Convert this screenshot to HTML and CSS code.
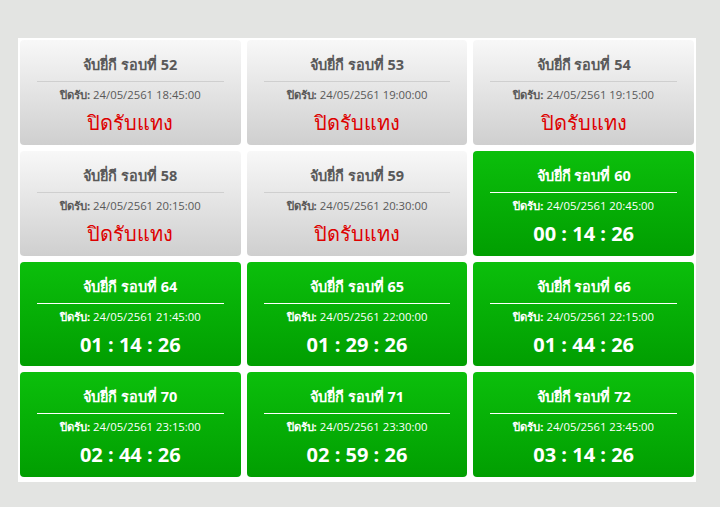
FILE: index.html
```html
<!DOCTYPE html>
<html lang="th">
<head>
<meta charset="utf-8">
<link rel="stylesheet" href="styles.css">
</head>
<body>
<div class="board">
  <div class="card closed"><div class="title">จับยี่กี รอบที่ 52</div><div class="rule"></div><div class="close-at"><b>ปิดรับ:</b> 24/05/2561 18:45:00</div><div class="status">ปิดรับแทง</div></div>
  <div class="card closed"><div class="title">จับยี่กี รอบที่ 53</div><div class="rule"></div><div class="close-at"><b>ปิดรับ:</b> 24/05/2561 19:00:00</div><div class="status">ปิดรับแทง</div></div>
  <div class="card closed"><div class="title">จับยี่กี รอบที่ 54</div><div class="rule"></div><div class="close-at"><b>ปิดรับ:</b> 24/05/2561 19:15:00</div><div class="status">ปิดรับแทง</div></div>
  <div class="card closed"><div class="title">จับยี่กี รอบที่ 58</div><div class="rule"></div><div class="close-at"><b>ปิดรับ:</b> 24/05/2561 20:15:00</div><div class="status">ปิดรับแทง</div></div>
  <div class="card closed"><div class="title">จับยี่กี รอบที่ 59</div><div class="rule"></div><div class="close-at"><b>ปิดรับ:</b> 24/05/2561 20:30:00</div><div class="status">ปิดรับแทง</div></div>
  <div class="card open"><div class="title">จับยี่กี รอบที่ 60</div><div class="rule"></div><div class="close-at"><b>ปิดรับ:</b> 24/05/2561 20:45:00</div><div class="timer">00 : 14 : 26</div></div>
  <div class="card open"><div class="title">จับยี่กี รอบที่ 64</div><div class="rule"></div><div class="close-at"><b>ปิดรับ:</b> 24/05/2561 21:45:00</div><div class="timer">01 : 14 : 26</div></div>
  <div class="card open"><div class="title">จับยี่กี รอบที่ 65</div><div class="rule"></div><div class="close-at"><b>ปิดรับ:</b> 24/05/2561 22:00:00</div><div class="timer">01 : 29 : 26</div></div>
  <div class="card open"><div class="title">จับยี่กี รอบที่ 66</div><div class="rule"></div><div class="close-at"><b>ปิดรับ:</b> 24/05/2561 22:15:00</div><div class="timer">01 : 44 : 26</div></div>
  <div class="card open"><div class="title">จับยี่กี รอบที่ 70</div><div class="rule"></div><div class="close-at"><b>ปิดรับ:</b> 24/05/2561 23:15:00</div><div class="timer">02 : 44 : 26</div></div>
  <div class="card open"><div class="title">จับยี่กี รอบที่ 71</div><div class="rule"></div><div class="close-at"><b>ปิดรับ:</b> 24/05/2561 23:30:00</div><div class="timer">02 : 59 : 26</div></div>
  <div class="card open"><div class="title">จับยี่กี รอบที่ 72</div><div class="rule"></div><div class="close-at"><b>ปิดรับ:</b> 24/05/2561 23:45:00</div><div class="timer">03 : 14 : 26</div></div>
</div>
</body>
</html>
```
FILE: styles.css
```css
html, body {
  margin: 0;
  padding: 0;
  background: #e3e4e2;
}
body {
  padding: 38px 24px 0 18px;
  font-family: "Open Sans", "Noto Sans", "DejaVu Sans", sans-serif;
}
.board {
  width: 678px;
  box-sizing: border-box;
  background: #ffffff;
  padding: 2px 2px 5px 2px;
  display: grid;
  grid-template-columns: repeat(3, 1fr);
  grid-template-rows: repeat(4, 104.75px);
  gap: 6px;
}
.card {
  border-radius: 4px;
  display: flex;
  flex-direction: column;
  align-items: center;
  padding: 0 17px;
  text-align: center;
}
.card.closed {
  background: linear-gradient(to bottom, #f8f8f8 0%, #cfcfcf 100%);
  color: #595959;
}
.card.open {
  background: linear-gradient(to bottom, #0bbf0b 0%, #019e01 100%);
  color: #ffffff;
}
.title {
  margin-top: 14px;
  font-size: 14.5px;
  font-weight: 700;
  line-height: 22px;
}
.rule {
  align-self: stretch;
  height: 1px;
  margin-top: 5px;
}
.closed .rule { background: #cfcfcf; }
.open .rule { background: #ffffff; }
.close-at {
  margin-top: 4px;
  font-size: 11.3px;
  line-height: 17px;
}
.status {
  margin-top: 6px;
  font-size: 20px;
  line-height: 28px;
  color: #de0000;
}
.timer {
  margin-top: 6px;
  font-size: 20px;
  font-weight: 700;
  line-height: 28px;
}
```
